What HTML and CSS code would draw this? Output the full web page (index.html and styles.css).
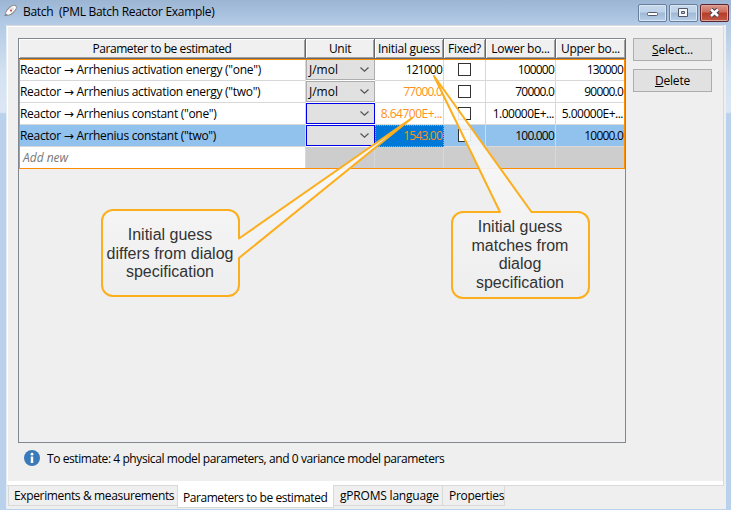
FILE: index.html
```html
<!DOCTYPE html>
<html lang="en">
<head>
<meta charset="utf-8">
<title>Batch (PML Batch Reactor Example)</title>
<link rel="stylesheet" href="styles.css">
</head>
<body>
<div class="window">
  <header class="titlebar">
    <svg class="app-icon" width="16" height="18" viewBox="0 0 16 18">
      <ellipse cx="8" cy="9.300" rx="6.600" ry="3.100" transform="rotate(-43 8 9.300)" fill="#fff" stroke="#858585"/>
      <path d="M1.500 14.500l3-1" stroke="#777"/><path d="M10 5.500l-2 6M6 8l5 0" stroke="#ccc" stroke-width=".7"/><circle cx="8" cy="9.500" r="1" fill="#d33"/>
    </svg>
    <h1>Batch&nbsp; (PML Batch Reactor Example)</h1>
    <div class="controls">
      <span class="control"><svg width="27" height="16"><rect x="8.500" y="7.500" width="10" height="3" rx="1" fill="#fff" stroke="#50586a"/></svg></span>
      <span class="control"><svg width="27" height="16"><path d="M8.500 3.500h9v8h-9zM11.500 6.500h3v2h-3z" fill="#f7f7f7" fill-rule="evenodd" stroke="#50586a"/></svg></span>
      <span class="control close"><svg width="27" height="16"><path d="M10 4.500l7 6.500M17 4.500l-7 6.500" stroke="#504050" stroke-width="4.500"/><path d="M10 4.500l7 6.500M17 4.500l-7 6.500" stroke="#fff" stroke-width="2.500"/></svg></span>
    </div>
  </header>
  <main class="client">
    <section class="page">
      <div class="work">
        <div class="table-box">
          <div class="row head">
            <div><span class="t-param">Parameter to be estimated</span></div><div><span>Unit</span></div><div><span>Initial guess</span></div><div><span>Fixed?</span></div><div><span>Lower bo...</span></div><div><span>Upper bo...</span></div>
          </div>
          <div class="body">
            <div class="row"><div class="name">Reactor <i class="arrow">→</i> Arrhenius activation energy ("one")</div><div class="unit"><span>J/mol</span><svg class="chev" width="9" height="5"><path d="M.5 .5l4 3.700 4-3.700"/></svg></div><div class="num">121000</div><div class="fixed"><b class="check"></b></div><div class="num">100000</div><div class="num">130000</div></div>
            <div class="row"><div class="name">Reactor <i class="arrow">→</i> Arrhenius activation energy ("two")</div><div class="unit"><span>J/mol</span><svg class="chev" width="9" height="5"><path d="M.5 .5l4 3.700 4-3.700"/></svg></div><div class="num differs">77000.0</div><div class="fixed"><b class="check"></b></div><div class="num">70000.0</div><div class="num">90000.0</div></div>
            <div class="row"><div class="name">Reactor <i class="arrow">→</i> Arrhenius constant ("one")</div><div class="unit empty"><svg class="chev" width="9" height="5"><path d="M.5 .5l4 3.700 4-3.700"/></svg></div><div class="num sci differs">8.64700E+...</div><div class="fixed"><b class="check"></b></div><div class="num sci">1.00000E+...</div><div class="num sci">5.00000E+...</div></div>
            <div class="row selected"><div class="name">Reactor <i class="arrow">→</i> Arrhenius constant ("two")</div><div class="unit empty"><svg class="chev" width="9" height="5"><path d="M.5 .5l4 3.700 4-3.700"/></svg></div><div class="num differs focus">1543.00</div><div class="fixed"><b class="check"></b></div><div class="num">100.000</div><div class="num">10000.0</div></div>
            <div class="row add"><div class="name">Add new</div><div></div><div></div><div></div><div></div><div></div></div>
          </div>
        </div>
        <div class="actions">
          <button><u>S</u>elect...</button>
          <button><u>D</u>elete</button>
        </div>
      </div>
      <div class="status">
        <svg width="16" height="16"><circle cx="8" cy="8" r="8" fill="#3b7ab8"/><circle cx="8" cy="4.200" r="1.400" fill="#fff"/><path d="M8 6.500V13" stroke="#fff" stroke-width="2.400"/></svg>
        <span>To estimate: 4 physical model parameters, and 0 variance model parameters</span>
      </div>
    </section>
    <nav class="tabs">
      <div class="tab t1"><span>Experiments &amp; measurements</span></div><div class="tab t2"><span>Parameters to be estimated</span></div><div class="tab t3"><span>gPROMS language</span></div><div class="tab t4"><span>Properties</span></div>
    </nav>
  </main>
  <svg class="callouts" width="731" height="510">
    <defs><linearGradient id="paper" x1="0" y1="0" x2="0" y2="1"><stop offset="0" stop-color="#fcfcfc" stop-opacity=".88"/><stop offset="1" stop-color="#eeeeee"/></linearGradient></defs>
    <path d="M112 210H228a11 11 0 0 1 11 11V238.500L412 118 239 258V285a11 11 0 0 1-11 11H113a11 11 0 0 1-11-11V221a11 11 0 0 1 11-11z"/>
    <path d="M463 212H500L434 76 531.500 212H578a11 11 0 0 1 11 11V287a11 11 0 0 1-11 11H463a11 11 0 0 1-11-11V223a11 11 0 0 1 11-11z"/>
  </svg>
  <p class="note differs-note">Initial guess<br>differs from dialog<br>specification</p>
  <p class="note matches-note">Initial guess<br>matches from<br>dialog<br>specification</p>
</div>
</body>
</html>
```
FILE: styles.css
```css
* { box-sizing: border-box; }
body { margin: 0; font: 12px/16px "Open Sans", "Noto Sans", sans-serif; letter-spacing: -.3px; color: #000; }
.window { position: relative; width: 731px; height: 510px; padding: 0 5px 1px 6px; overflow: hidden; background: linear-gradient(#9db9d8 0, #b2cae5 24px, #d5e2f1 75px, #dbe7f4 112px, #b9d1ea 114px, #b9d1ea 100%); }
.titlebar { display: flex; height: 25px; margin: 0 -5px 0 -6px; padding-left: 3px; background: linear-gradient(#9bb5d3, #b3cbe6); }
.app-icon { margin-top: 1px; }
h1 { flex: 1; margin: 4px 0 0 4px; font-size: 12px; font-weight: 400; line-height: 16px; letter-spacing: -.29px; white-space: nowrap; }
.controls { display: flex; gap: 2px; padding: 4px 2px 0 0; }
.control { width: 29px; height: 18px; border: 1px solid #687f9d; border-radius: 2px; background: linear-gradient(#c8d9ec 0, #bdd1e8 45%, #9eb8d5 50%, #b9cfe8 100%); box-shadow: inset 0 0 0 1px #d9e6f5; }
.control svg { display: block; }
.close { border-color: #5e2531; background: linear-gradient(#db9a8e 0, #cc6a57 45%, #b73b27 50%, #bf5a46 100%); box-shadow: inset 0 0 0 1px #dda497; }
.client { display: flex; flex-direction: column; height: 484px; background: #efefef; border-left: 1px solid #e4ecf5; }
.page { height: 461px; margin-right: 2px; padding: 12px 0 0 11px; border-top: 1px solid #d9d9d9; border-right: 1px solid #d9d9d9; border-bottom: 1px solid #d9d9d9; box-shadow: inset 1px 1px #fff, inset 0 -4px #fff; }
.work { display: flex; gap: 7px; }
.table-box { width: 608px; height: 405px; border: 1px solid #828790; }
.row { display: grid; grid-template-columns: 287px 69px 69px 42px 70px 69px; height: 22px; }
.row > div { border-right: 1px solid #d8d8d8; border-bottom: 1px solid #d8d8d8; white-space: nowrap; overflow: hidden; }
.head { height: 20px; grid-template-columns: 287px 69px 69px 42px 70px 70px; }
.head > div { display: flex; justify-content: center; padding-top: 2px; background: #f0f0f0; border-right: 1px solid #696969; border-bottom: 1px solid #696969; box-shadow: inset 1px 1px #fff, inset -1px -1px #a0a0a0; }
.t-param { letter-spacing: -.44px; }
.body { position: relative; width: 606px; height: 110px; background: #fff; }
.body::after { content: ""; position: absolute; inset: 0; border: 1px solid #ff8c00; }
.name { padding: 3px 0 0 1px; }
.arrow { font: 12px/12px "DejaVu Sans", sans-serif; letter-spacing: 0; }
.num { padding: 3px 1px 0 0; text-align: right; letter-spacing: -.8px; }
.sci { letter-spacing: -.5px; }
.row > .unit { display: flex; align-items: center; justify-content: space-between; padding: 0 5px 0 2px; height: 21px; background: #e1e1e1; border: 1px solid #adadad; letter-spacing: 0; }
.row > .unit.empty { justify-content: flex-end; border-color: #0000e6; }
.chev path { fill: none; stroke: #555; stroke-width: 1.2; }
.fixed { display: flex; justify-content: center; align-items: center; }
.check { width: 13px; height: 13px; border: 1px solid #333; background: #fff; }
.differs { color: #ff9020; }
.selected > div { background: #91c1ed; }
.row > .focus { background: #0078d7; border: 1px dotted #ff8c30; }
.selected .focus { padding: 2px 1px 0 0; }
.add > div { background: #cdcdcd; }
.add > .name { background: #fff; color: #777; font-style: italic; padding-left: 4px; letter-spacing: 0; }
.actions { display: flex; flex-direction: column; gap: 8px; }
button { width: 79px; height: 23px; padding: 0; border: 1px solid #adadad; background: #e1e1e1; color: #000; font: inherit; letter-spacing: -.2px; }
.status { display: flex; gap: 7px; align-items: center; margin: 6px 0 0 6px; letter-spacing: -.42px; }
.status span { padding-top: 2px; }
.status svg { display: block; }
.tabs { display: flex; padding-left: 1px; white-space: nowrap; }
.tab { height: 20px; padding: 2px 0 0 5px; border: 1px solid #d9d9d9; border-top: 0; }
.t1 { width: 169px; border-right: 0; letter-spacing: -.36px; }
.t2 { width: 157px; margin-top: -1px; height: 23px; padding-top: 5px; background: #fff; letter-spacing: -.44px; }
.t3 { width: 109px; border-left: 0; padding-left: 6px; letter-spacing: -.2px; }
.t4 { width: 62px; border-left: 0; padding-left: 6px; }
.callouts { position: absolute; inset: 0; }
.callouts path { fill: url(#paper); stroke: #fcaf1e; stroke-width: 2; stroke-linejoin: round; }
.note { position: absolute; margin: 0; width: 138px; text-align: center; color: #333; font: 16px/18.5px "Liberation Sans", sans-serif; letter-spacing: 0; white-space: nowrap; }
.differs-note { left: 101px; top: 226px; }
.matches-note { left: 451px; top: 218px; }
```
